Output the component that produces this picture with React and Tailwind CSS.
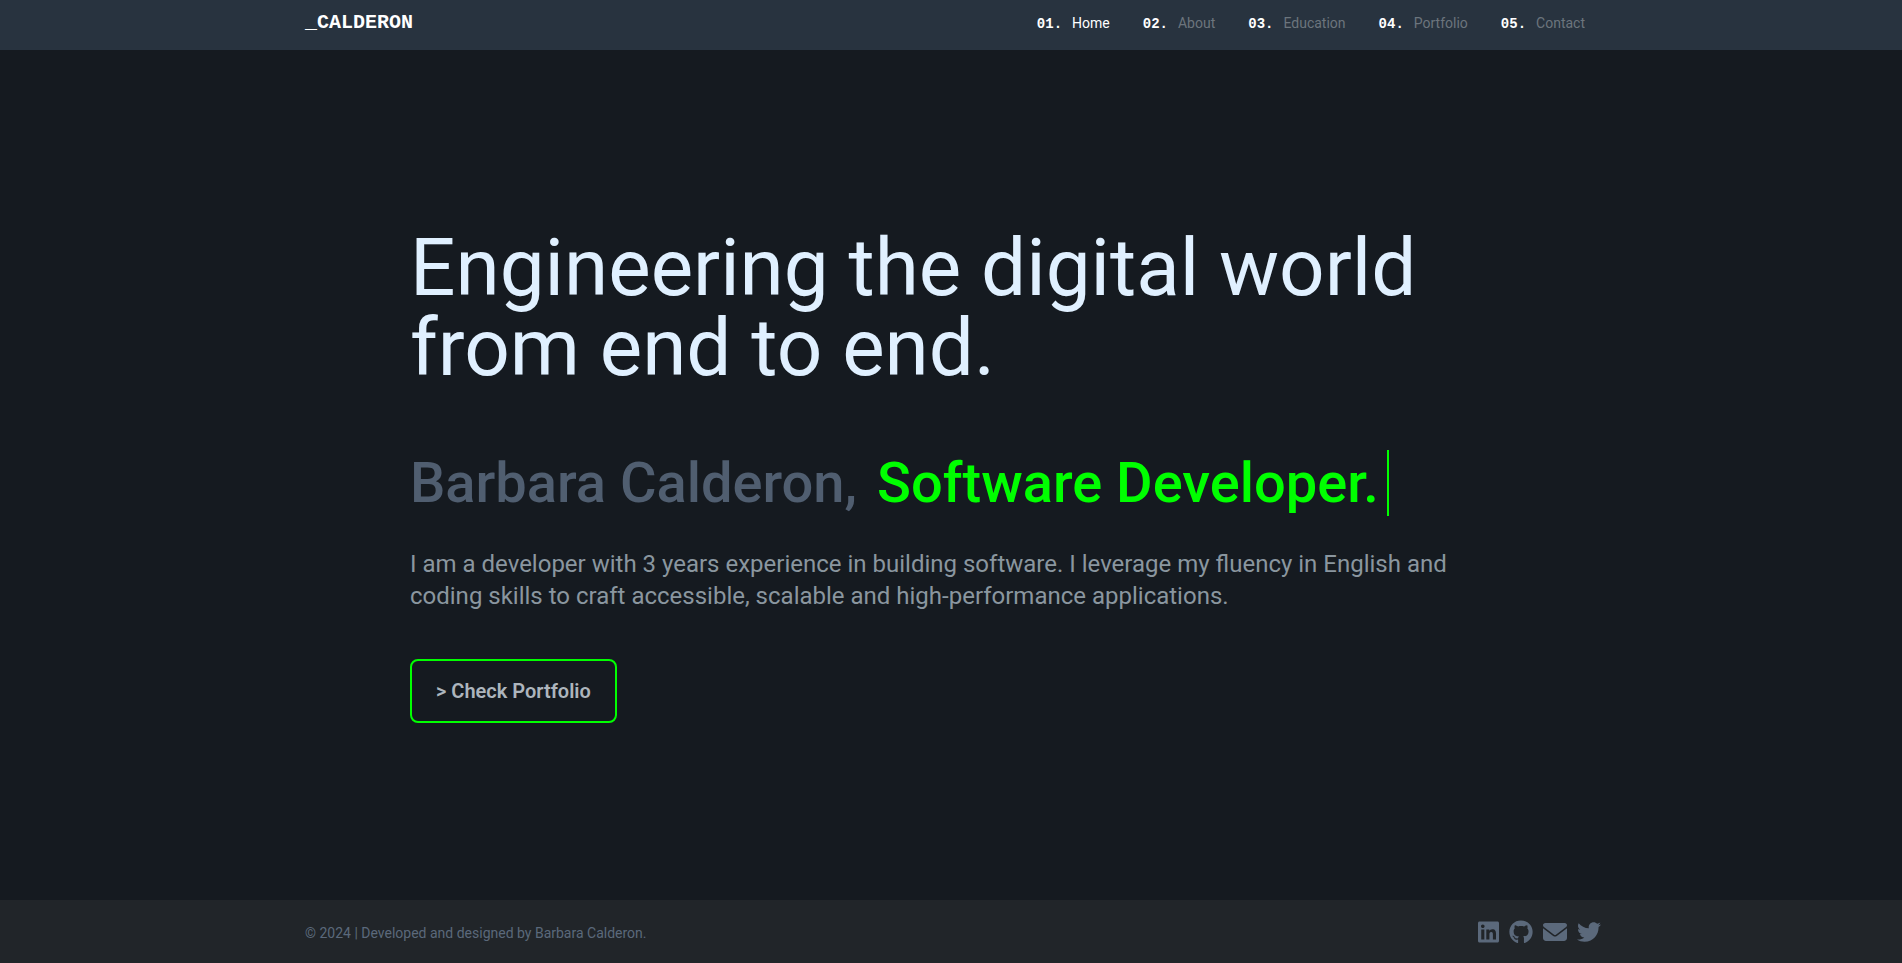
import { FaLinkedin, FaGithub, FaEnvelope, FaTwitter } from "react-icons/fa6";

const links = [
  { no: "01.", label: "Home", active: true },
  { no: "02.", label: "About" },
  { no: "03.", label: "Education" },
  { no: "04.", label: "Portfolio" },
  { no: "05.", label: "Contact" },
];

const socials = [
  { label: "LinkedIn", Icon: FaLinkedin, size: "h-6 w-[21px]" },
  { label: "GitHub", Icon: FaGithub, size: "size-6" },
  { label: "Email", Icon: FaEnvelope, size: "size-6" },
  { label: "Twitter", Icon: FaTwitter, size: "size-6" },
];

export default function App() {
  return (
    <div className="flex min-h-screen flex-col bg-[#151a20] font-['Roboto',sans-serif]">
      <header className="bg-[#28333f]">
        <div className="mx-auto flex h-[50px] max-w-[1320px] items-center justify-between pr-[26px] pb-1 pl-3.5">
          <a href="#home" className="font-['Liberation_Mono',monospace] text-xl font-bold text-white">
            _CALDERON
          </a>
          <nav className="flex gap-[33px]">
            {links.map(({ no, label, active }) => (
              <a key={no} href={`#${label.toLowerCase()}`} className="flex items-baseline gap-[10px] text-sm">
                <span className="font-['Liberation_Mono',monospace] font-bold text-white">{no}</span>
                <span className={active ? "text-white" : "text-[#6c757d]"}>{label}</span>
              </a>
            ))}
          </nav>
        </div>
      </header>

      <main className="flex grow flex-col items-center justify-center px-6">
        <div className="w-full max-w-[1082px]">
          <h1 className="text-[80px] leading-[80px] text-[#e0f0ff]">
            Engineering the digital world
            <br />
            from end to end.
          </h1>
          <h2 className="mt-[62px] flex flex-wrap items-center gap-x-5 text-[56px] leading-[66px] font-medium text-[#505e70]">
            Barbara Calderon,
            <span className="border-r-2 border-[#00ff00] pr-2 text-[#00ff00]">Software Developer.</span>
          </h2>
          <p className="mt-8 text-2xl leading-8 text-[#8a969f]">
            I am a developer with 3 years experience in building software. I leverage my fluency in English and coding
            skills to craft accessible, scalable and high-performance applications.
          </p>
          <button
            type="button"
            className="mt-[47px] h-16 rounded-lg border-2 border-[#00ff00] px-6 text-xl font-semibold text-[#adb5bd]"
          >
            &gt; Check Portfolio
          </button>
        </div>
      </main>

      <footer className="bg-[#212529] text-[#5b697b]">
        <div className="mx-auto flex h-[63px] max-w-[1320px] items-center justify-between pr-2.5 pl-3.5">
          <p className="pt-0.5 text-sm">© 2024 | Developed and designed by Barbara Calderon.</p>
          <div className="flex items-center gap-[10px]">
            {socials.map(({ label, Icon, size }) => (
              <a key={label} href={`#${label.toLowerCase()}`} aria-label={label}>
                <Icon className={size} />
              </a>
            ))}
          </div>
        </div>
      </footer>
    </div>
  );
}
